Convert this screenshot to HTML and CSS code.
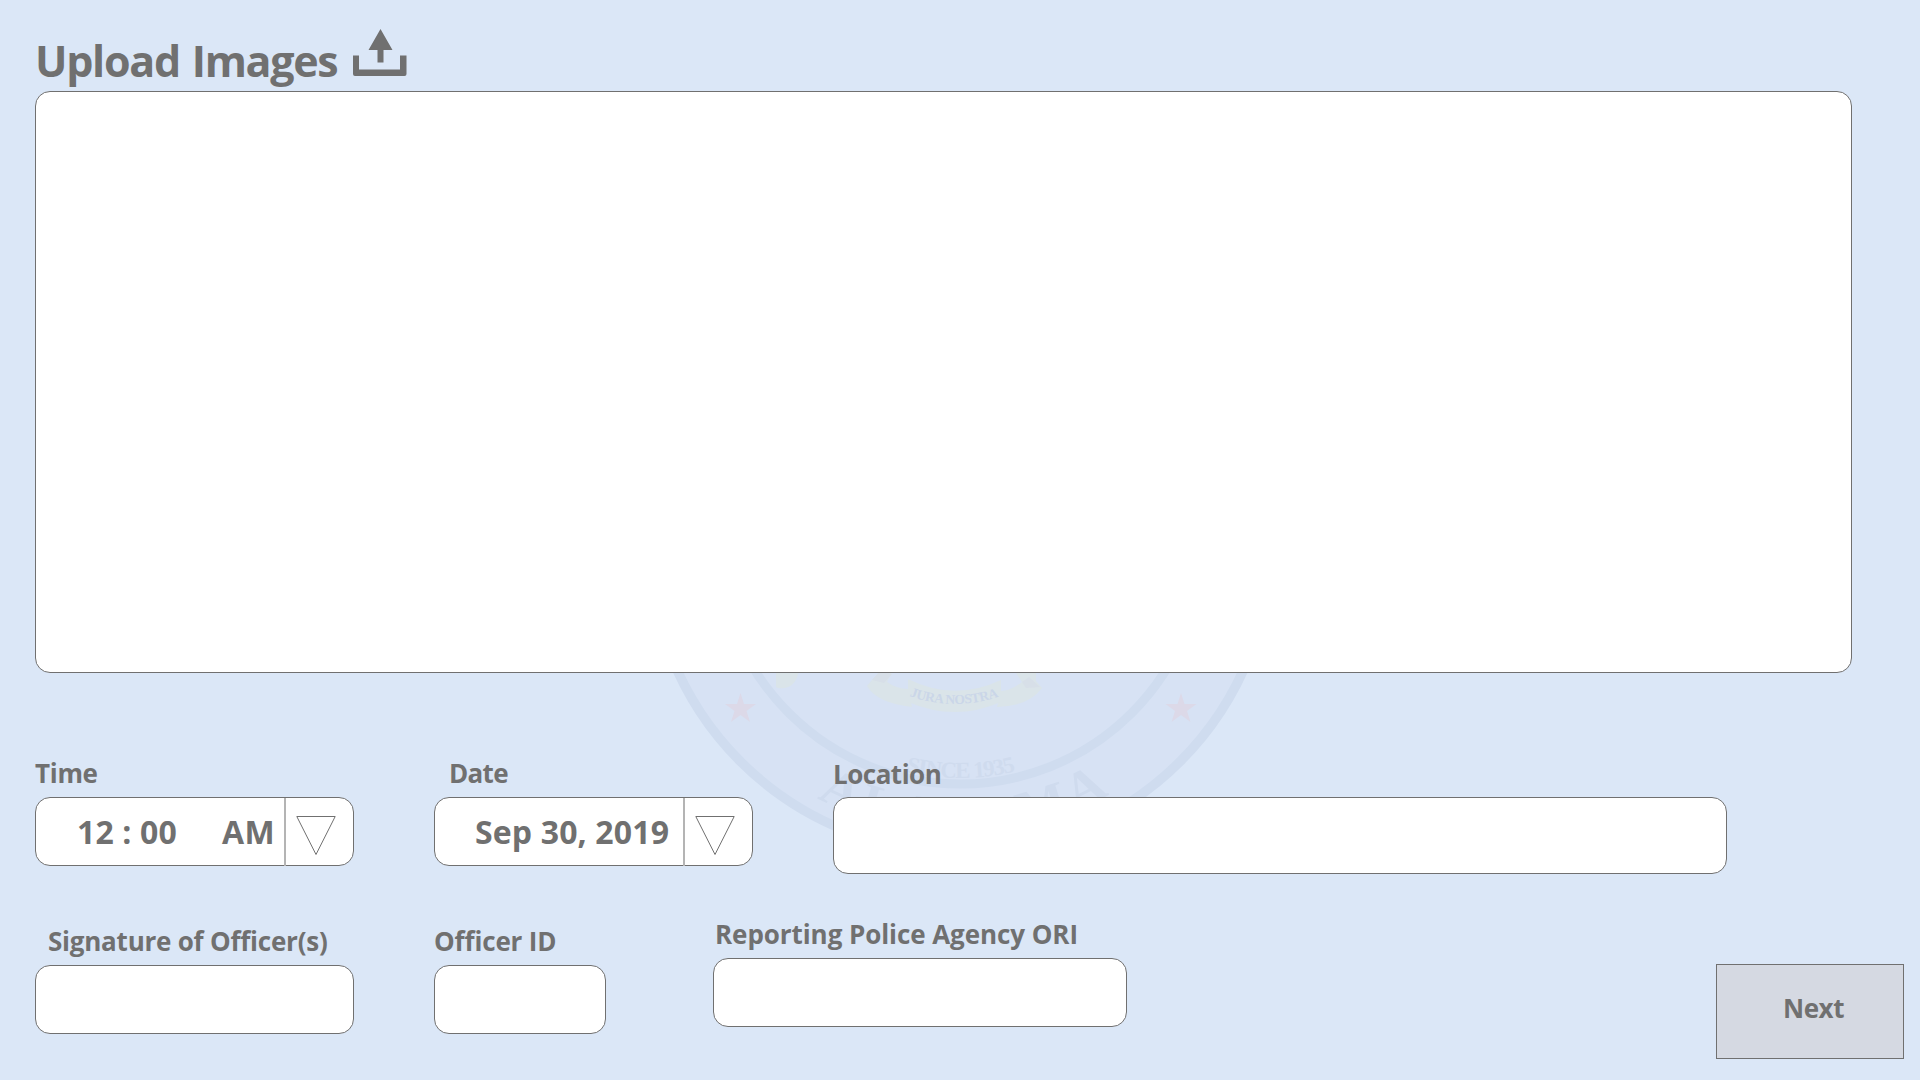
FILE: index.html
```html
<!DOCTYPE html>
<html lang="en">
<head>
<meta charset="utf-8">
<title>Upload Images</title>
<link rel="stylesheet" href="styles.css">
</head>
<body>
<svg class="seal" viewBox="640 220 640 640" aria-hidden="true">
  <defs>
    <path id="arc-state" d="M667 542A293 293 0 0 0 1253 542"/>
    <path id="arc-since" d="M724 542A236 236 0 0 0 1196 542"/>
    <path id="arc-motto" d="M819 568A136 136 0 0 0 1091 568"/>
  </defs>
  <circle cx="960.3" cy="541.5" r="311" fill="#d7e2f4" stroke="#cfdcef" stroke-width="9.5"/>
  <circle cx="960.3" cy="541.5" r="242.5" fill="#d7e2f4" stroke="#cfdcef" stroke-width="9"/>
  <g fill="#dcd9e8">
    <path d="M740.5 693l3.500 11h12l-9.500 7 3.500 11-9.500-7-9.500 7 3.500-11-9.500-7h12z"/>
    <path d="M1181 693l3.500 11h12l-9.500 7 3.500 11-9.500-7-9.500 7 3.500-11-9.500-7h12z"/>
  </g>
  <g fill="#dae4e9">
    <path d="M776 670h23q-3 17-15 18-5 1-8-1z"/>
    <path d="M872 670h21l-6 12q10 7 21 7l4 18q-35-4-45-21l5-6 8-7z"/>
    <path d="M1014 670h22v11l6 7q-13 18-45 19l4-16q11-1 21-9z"/>
    <path d="M908 679q46 23 93 1v22q-46 20-93 0z"/>
  </g>
  <g fill="#d7dfe8">
    <path d="M872 680l12 3 8-9-12-3z"/>
    <path d="M1022 682l7-5 11 10-14 1z"/>
  </g>
  <g class="seal-text" text-anchor="middle">
    <text font-size="53" fill="#cfdbee"><textPath href="#arc-state" startOffset="50.400%" textLength="306">ALABAMA</textPath></text>
    <text font-size="23" fill="#cfdbee"><textPath href="#arc-since" startOffset="50.100%" textLength="111">SINCE 1935</textPath></text>
    <text font-size="13.5" fill="#cad6e8"><textPath href="#arc-motto" startOffset="49.800%" textLength="91">JURA NOSTRA</textPath></text>
  </g>
</svg>
<main class="page">
  <header class="head">
    <h1 class="title">Upload Images</h1>
    <svg class="upload-icon" viewBox="0 0 54 48" aria-hidden="true">
      <path d="M27.500 0L39.500 21H30.500V33.500H24.500V21H15.500z"/>
      <path d="M0 26.500H6V40.500H47V26.500H53.500V45Q53.500 47 51.500 47H2Q0 47 0 45z"/>
    </svg>
  </header>
  <section class="box dropzone"></section>
  <div class="row row-when">
    <div class="field field-wide">
      <label class="label label-time">Time</label>
      <div class="box picker">
        <span class="value time"><span class="clock">12 : 00</span><span class="ampm">AM</span></span>
        <span class="toggle"><svg class="tri" viewBox="0 0 40 40"><path d="M.8 .5H39.200L20 38.500z"/></svg></span>
      </div>
    </div>
    <div class="field field-wide">
      <label class="label label-date">Date</label>
      <div class="box picker">
        <span class="value date">Sep 30, 2019</span>
        <span class="toggle"><svg class="tri" viewBox="0 0 40 40"><path d="M.8 .5H39.200L20 38.500z"/></svg></span>
      </div>
    </div>
    <div class="field">
      <label class="label label-location">Location</label>
      <div class="box location"></div>
    </div>
  </div>
  <div class="row row-officer">
    <div class="field field-wide">
      <label class="label label-sign">Signature of Officer(s)</label>
      <div class="box short"></div>
    </div>
    <div class="field field-id">
      <label class="label label-id">Officer ID</label>
      <div class="box short"></div>
    </div>
    <div class="field field-ori">
      <label class="label label-ori">Reporting Police Agency ORI</label>
      <div class="box short"></div>
    </div>
    <button class="next" type="button">Next</button>
  </div>
</main>
</body>
</html>
```

FILE: styles.css
```css
* { box-sizing: border-box; }
body {
  margin: 0;
  width: 1920px;
  height: 1080px;
  overflow: hidden;
  background: #dbe7f7;
  color: #707070;
  font-family: "Open Sans", "Noto Sans", sans-serif;
  font-weight: 700;
}
.seal { position: absolute; left: 640px; top: 220px; width: 640px; height: 640px; }
.seal-text { font-family: "Liberation Serif", serif; font-weight: 700; }
.page { position: relative; padding-left: 35px; }
.head { display: flex; height: 91px; }
.title {
  margin: 31px 0 0;
  width: 318px;
  font-size: 43px;
  line-height: 60px;
  letter-spacing: -1.3px;
  word-spacing: 2px;
  white-space: nowrap;
}
.upload-icon { width: 54px; height: 48px; margin-top: 29px; fill: #707070; }
.box { border: 1px solid #707070; border-radius: 15px; background: #fff; }
.dropzone { width: 1817px; height: 582px; }
.row { display: flex; }
.row-when { height: 154px; margin-top: 77px; gap: 80px; }
.row-officer { margin-top: 7px; height: 101px; align-items: flex-start; }
.field { display: flex; flex-direction: column; }
.field-wide { width: 319px; }
.label { height: 47px; line-height: 46px; font-size: 26px; white-space: nowrap; }
.label-time { letter-spacing: -.3px; }
.label-date { padding-left: 15px; letter-spacing: -.7px; }
.label-location { padding-top: 1px; letter-spacing: -.5px; }
.label-sign { padding-left: 13px; letter-spacing: -.23px; }
.label-id { letter-spacing: -.15px; }
.label-ori { padding-left: 2px; letter-spacing: -.07px; }
.picker { display: flex; height: 69px; }
.value { display: flex; align-items: center; width: 248px; font-size: 32px; white-space: nowrap; letter-spacing: .15px; }
.time { padding-left: 41px; }
.clock { width: 145px; }
.ampm { letter-spacing: .5px; }
.date { padding-left: 40px; }
.toggle { border-left: 2px solid #b4b4b4; height: 68px; padding: 18px 0 0 10px; }
.tri { display: block; width: 40px; height: 40px; fill: none; stroke: #707070; stroke-width: 1; }
.location { width: 894px; height: 77px; }
.short { height: 69px; }
.row-officer .field { padding-top: 7px; }
.field-id { width: 172px; margin-left: 80px; }
.row-officer .field-ori { width: 414px; margin-left: 107px; padding-top: 0; }
.next {
  width: 188px;
  height: 95px;
  margin: 53px 0 0 589px;
  padding: 0 0 8px 7px;
  border: 1px solid #707070;
  background: #d5d9e2;
  color: inherit;
  font: inherit;
  font-size: 26px;
  letter-spacing: -.4px;
}
```
